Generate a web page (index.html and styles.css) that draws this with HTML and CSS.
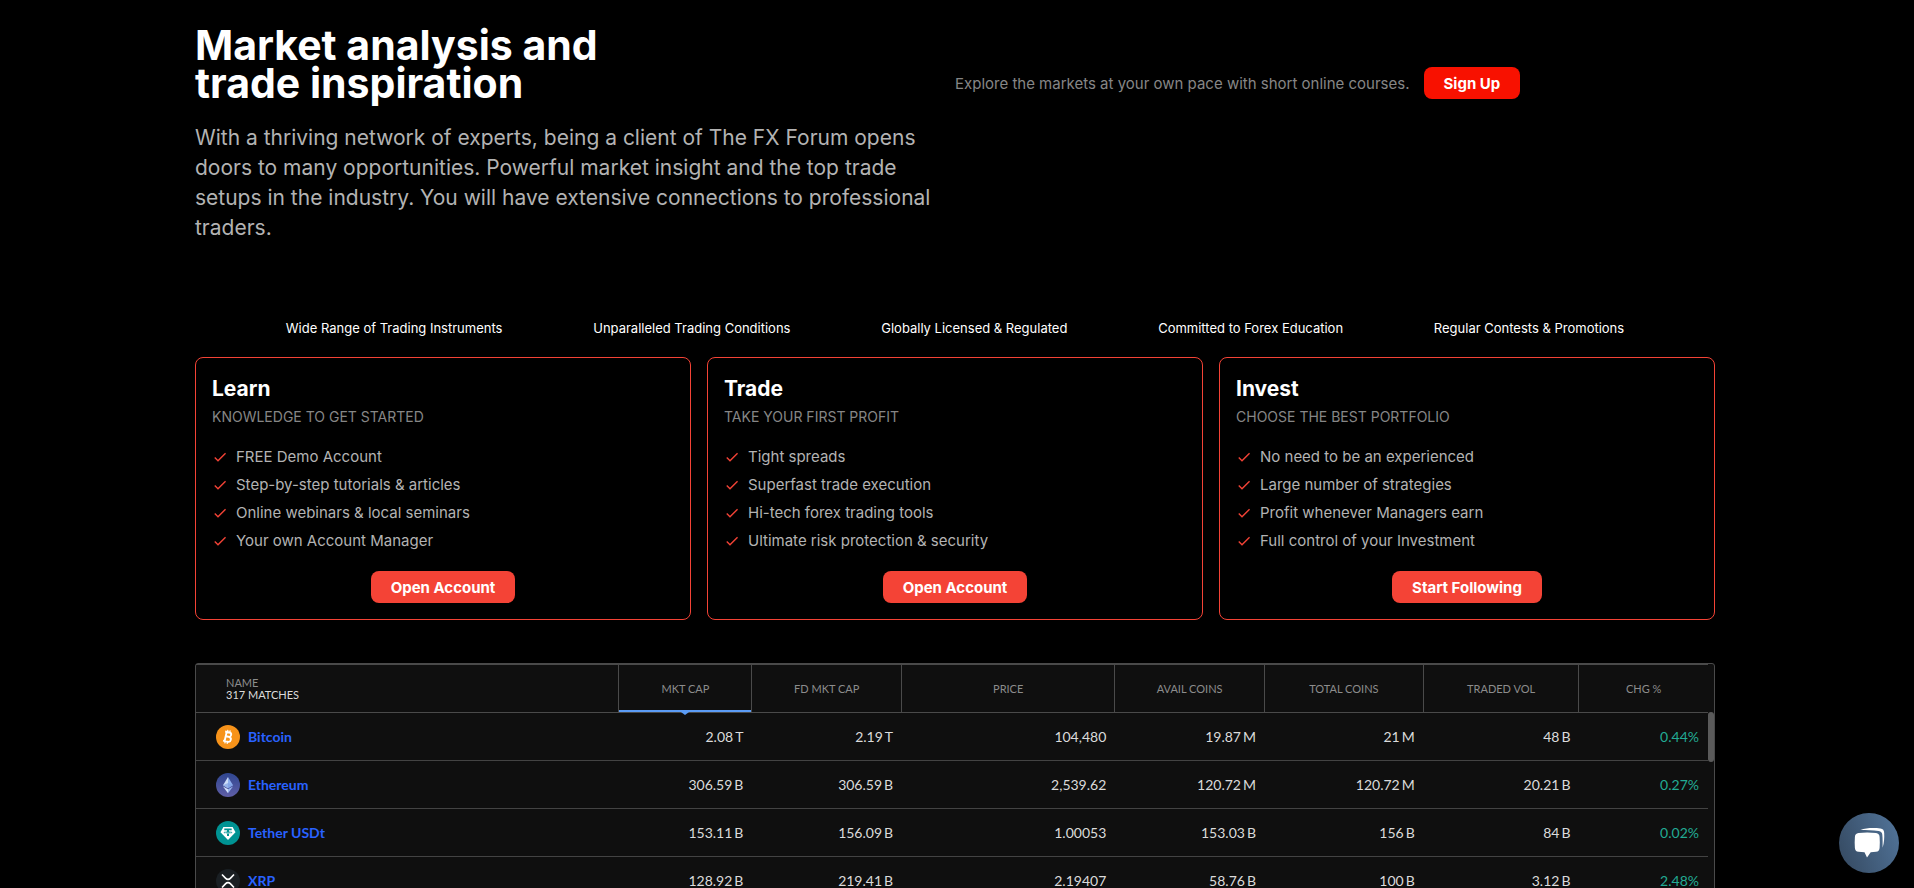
FILE: index.html
```html
<!DOCTYPE html>
<html lang="en">
<head>
<meta charset="utf-8">
<meta name="viewport" content="width=device-width, initial-scale=1">
<title>The FX Forum</title>
<link rel="stylesheet" href="styles.css">
</head>
<body>
<svg class="defs" aria-hidden="true">
  <symbol id="check" viewBox="0 0 24 24"><path d="M9 16.17 4.83 12l-1.42 1.41L9 19 21 7l-1.41-1.41z"/></symbol>
</svg>
<main class="page">
  <section class="hero">
    <div>
      <h1 class="hero-title">Market analysis and<br>trade inspiration</h1>
      <p class="hero-text">With a thriving network of experts, being a client of The FX Forum opens doors to many opportunities. Powerful market insight and the top trade setups in the industry. You will have extensive connections to professional traders.</p>
    </div>
    <div class="hero-cta">
      <span>Explore the markets at your own pace with short online courses.</span>
      <button class="btn btn-signup" type="button">Sign Up</button>
    </div>
  </section>

  <ul class="features">
    <li>Wide Range of Trading Instruments</li>
    <li>Unparalleled Trading Conditions</li>
    <li>Globally Licensed &amp; Regulated</li>
    <li>Committed to Forex Education</li>
    <li>Regular Contests &amp; Promotions</li>
  </ul>

  <section class="cards">
    <article class="card">
      <h2 class="card-title">Learn</h2>
      <p class="card-sub">KNOWLEDGE TO GET STARTED</p>
      <ul class="card-list">
        <li><svg class="check"><use href="#check"/></svg>FREE Demo Account</li>
        <li><svg class="check"><use href="#check"/></svg>Step-by-step tutorials &amp; articles</li>
        <li><svg class="check"><use href="#check"/></svg>Online webinars &amp; local seminars</li>
        <li><svg class="check"><use href="#check"/></svg>Your own Account Manager</li>
      </ul>
      <button class="btn" type="button">Open Account</button>
    </article>
    <article class="card">
      <h2 class="card-title">Trade</h2>
      <p class="card-sub">TAKE YOUR FIRST PROFIT</p>
      <ul class="card-list">
        <li><svg class="check"><use href="#check"/></svg>Tight spreads</li>
        <li><svg class="check"><use href="#check"/></svg>Superfast trade execution</li>
        <li><svg class="check"><use href="#check"/></svg>Hi-tech forex trading tools</li>
        <li><svg class="check"><use href="#check"/></svg>Ultimate risk protection &amp; security</li>
      </ul>
      <button class="btn" type="button">Open Account</button>
    </article>
    <article class="card">
      <h2 class="card-title">Invest</h2>
      <p class="card-sub">CHOOSE THE BEST PORTFOLIO</p>
      <ul class="card-list">
        <li><svg class="check"><use href="#check"/></svg>No need to be an experienced</li>
        <li><svg class="check"><use href="#check"/></svg>Large number of strategies</li>
        <li><svg class="check"><use href="#check"/></svg>Profit whenever Managers earn</li>
        <li><svg class="check"><use href="#check"/></svg>Full control of your Investment</li>
      </ul>
      <button class="btn" type="button">Start Following</button>
    </article>
  </section>

  <section class="screener">
    <table class="coins">
      <colgroup>
        <col class="c-name"><col class="c-cap"><col class="c-fd"><col class="c-price"><col class="c-avail"><col class="c-total"><col class="c-vol"><col class="c-chg">
      </colgroup>
      <thead>
        <tr>
          <th class="name-head" scope="col">NAME<span class="matches">317 MATCHES</span></th>
          <th class="sorted" scope="col">MKT CAP</th>
          <th scope="col">FD MKT CAP</th>
          <th scope="col">PRICE</th>
          <th scope="col">AVAIL COINS</th>
          <th scope="col">TOTAL COINS</th>
          <th scope="col">TRADED VOL</th>
          <th scope="col">CHG %</th>
        </tr>
      </thead>
      <tbody>
        <tr>
          <td><div class="coin">
            <svg class="coin-icon" viewBox="0 0 24 24"><circle cx="12" cy="12" r="12" fill="#f7931a"/><g transform="rotate(13 12 12)" fill="none" stroke="#fff"><path d="M9.600 7.300v9.400M8 7.300h4.400a2.100 2.100 0 0 1 0 4.400H9.800h3.100a2.400 2.400 0 0 1 0 5H8" stroke-width="1.900"/><path d="M10.300 5v2.200M12.700 5v2.200M10.300 16.800V19M12.700 16.800V19" stroke-width="1.200"/></g></svg>
            <a class="coin-link" href="#bitcoin">Bitcoin</a></div></td>
          <td>2.08<span class="unit">T</span></td><td>2.19<span class="unit">T</span></td><td>104,480</td><td>19.87<span class="unit">M</span></td><td>21<span class="unit">M</span></td><td>48<span class="unit">B</span></td><td class="up">0.44%</td>
        </tr>
        <tr>
          <td><div class="coin">
            <svg class="coin-icon" viewBox="0 0 24 24"><defs><linearGradient id="eth" x2="0" y2="1"><stop stop-color="#2f4690"/><stop offset="1" stop-color="#5f5ea6"/></linearGradient></defs><circle cx="12" cy="12" r="12" fill="url(#eth)"/><path d="M12 4 7 12.300 12 15.200z" fill="#cdddf8"/><path d="m12 4 5 8.300-5 2.900z" fill="#8fb0ee"/><path d="m12 10 5 2.300-5 2.900-5-2.900z" fill="#7fa1e4" opacity=".7"/><path d="m7 13.400 5 6.800v-3.900z" fill="#d4e2fa"/><path d="m17 13.400-5 6.800v-3.900z" fill="#9bb8ef"/></svg>
            <a class="coin-link" href="#ethereum">Ethereum</a></div></td>
          <td>306.59<span class="unit">B</span></td><td>306.59<span class="unit">B</span></td><td>2,539.62</td><td>120.72<span class="unit">M</span></td><td>120.72<span class="unit">M</span></td><td>20.21<span class="unit">B</span></td><td class="up">0.27%</td>
        </tr>
        <tr>
          <td><div class="coin">
            <svg class="coin-icon" viewBox="0 0 24 24"><circle cx="12" cy="12" r="12" fill="#009393"/><path d="M7.400 6h9.200l2.900 5.300L12 19l-7.500-7.700z" fill="#fff"/><path d="M8.300 7.500h7.400v1.800h-2.700v1.300c2 .1 3.400.5 3.400 1s-1.400.9-3.400 1V15h-2v-2.400c-2-.1-3.400-.5-3.400-1s1.400-.9 3.400-1V9.300H8.300z" fill="#009393"/><path d="M8.600 11.600c1.800.7 5 .7 6.800 0" fill="none" stroke="#fff" stroke-width=".7"/></svg>
            <a class="coin-link" href="#tether">Tether USDt</a></div></td>
          <td>153.11<span class="unit">B</span></td><td>156.09<span class="unit">B</span></td><td>1.00053</td><td>153.03<span class="unit">B</span></td><td>156<span class="unit">B</span></td><td>84<span class="unit">B</span></td><td class="up">0.02%</td>
        </tr>
        <tr>
          <td><div class="coin">
            <svg class="coin-icon" viewBox="0 0 24 24"><circle cx="12" cy="12" r="12" fill="#1a1f23"/><path d="m6 5.500 3.700 3.900a3.200 3.200 0 0 0 4.600 0L18 5.500M6 18.500l3.700-3.900a3.200 3.200 0 0 1 4.600 0l3.700 3.900" fill="none" stroke="#fff" stroke-width="1.600"/></svg>
            <a class="coin-link" href="#xrp">XRP</a></div></td>
          <td>128.92<span class="unit">B</span></td><td>219.41<span class="unit">B</span></td><td>2.19407</td><td>58.76<span class="unit">B</span></td><td>100<span class="unit">B</span></td><td>3.12<span class="unit">B</span></td><td class="up">2.48%</td>
        </tr>
      </tbody>
    </table>
    <div class="scroll-track"><div class="scroll-thumb"></div></div>
  </section>
</main>

<button class="chat" type="button" aria-label="Open chat">
  <svg class="chat-icon" viewBox="0 0 32 32"><path d="M7.500 2.900C13 .9 20.500.8 27.500 1.500c2.500.3 3.600 1.800 3.700 4.500.2 5 0 9.500-1.600 14.700.1-5 .1-8.700-.3-12.900-.2-2.400-1.300-3.600-3.500-3.900C19.500 3 13.500 3.300 7.500 2.900z"/><path d="M5.500 6.100c5.500-.7 12-.7 17.500 0 2.300.3 3.400 1.500 3.600 3.800.3 3.700.3 7.400 0 11-.2 2.300-1.300 3.500-3.600 3.800-1.800.3-3.500.4-5.300.5L14 30.500 11.500 25.200c-2-.1-4-.2-6-.5-2.300-.3-3.400-1.500-3.600-3.800-.3-3.600-.3-7.300 0-11 .2-2.300 1.300-3.500 3.600-3.800z"/></svg>
</button>
</body>
</html>
```

FILE: styles.css
```css
* {
  box-sizing: border-box;
}

body {
  margin: 0;
  padding-right: 4px;
  height: 100vh;
  overflow: hidden;
  background: #000;
  color: #fff;
  font-family: Inter, "Open Sans", sans-serif;
}

h1, h2, p, ul {
  margin: 0;
  padding: 0;
}

ul {
  list-style: none;
}

.defs {
  display: none;
}

.page {
  max-width: 1552px;
  margin: 0 auto;
  padding: 26px 16px 0;
}

/* Hero */
.hero {
  display: grid;
  grid-template-columns: 1fr 1fr;
  align-items: start;
}

.hero-title {
  font-size: 41px;
  line-height: 38px;
  font-weight: 700;
}

.hero-text {
  margin-top: 21px;
  color: #b3b3b3;
  font-size: 21px;
  line-height: 30px;
}

.hero-cta {
  display: flex;
  align-items: center;
  gap: 14px;
  padding-top: 41px;
  color: #868686;
  font-size: 15px;
}

.btn {
  height: 32px;
  padding: 0 20px;
  border: 0;
  border-radius: 8px;
  background: #f44336;
  color: #fff;
  font-family: inherit;
  font-size: 15px;
  font-weight: 700;
  cursor: pointer;
}

.btn-signup {
  background: #f81100;
}

/* Feature strip */
.features {
  display: flex;
  justify-content: space-evenly;
  margin-top: 73px;
  font-size: 13px;
  line-height: 24px;
}

/* Cards */
.cards {
  display: grid;
  grid-template-columns: repeat(3, 1fr);
  gap: 16px;
  margin-top: 17px;
}

.card {
  display: flex;
  flex-direction: column;
  padding: 16px;
  border: 1px solid #f44336;
  border-radius: 8px;
}

.card-title {
  font-size: 21px;
  line-height: 29px;
}

.card-sub {
  margin-top: 4px;
  color: #868686;
  font-size: 14px;
  line-height: 20px;
}

.card-list {
  margin: 16px 0;
  color: #b3b3b3;
  font-size: 15px;
  line-height: 28px;
}

.card-list li {
  display: flex;
  align-items: center;
  gap: 8px;
}

.check {
  width: 16px;
  height: 16px;
  fill: #f44336;
}

.card .btn {
  align-self: center;
}

/* Coin table */
.screener {
  display: flex;
  margin-top: 43px;
  border: 1px solid #4a4a4a;
  border-radius: 3px;
  background: #0f0f0f;
  font-family: Lato, "Open Sans", sans-serif;
}

.coins {
  flex: 1;
  table-layout: fixed;
  border-spacing: 0;
  font-size: 14px;
  color: #dbdbdb;
}

.c-name { width: 28%; }
.c-cap { width: 8.8%; }
.c-fd { width: 9.9%; }
.c-price { width: 14.1%; }
.c-avail { width: 9.9%; }
.c-total { width: 10.5%; }
.c-vol { width: 10.3%; }
.c-chg { width: 8.5%; }

.coins th {
  position: relative;
  height: 49px;
  padding: 0;
  border: solid #4a4a4a;
  border-width: 1px 1px 1px 0;
  color: #8c8c8c;
  font-size: 11px;
  line-height: 12px;
  font-weight: 400;
}

.coins th:last-child {
  border-right: 0;
}

.coins .name-head {
  padding-left: 30px;
  text-align: left;
}

.matches {
  display: block;
  color: #dbdbdb;
}

.sorted::before {
  content: "";
  position: absolute;
  left: 0;
  right: 0;
  bottom: 0;
  height: 2px;
  background: #5b9cf6;
}

.sorted::after {
  content: "";
  position: absolute;
  left: 50%;
  top: 100%;
  margin-left: -4px;
  border: 4px solid transparent;
  border-top: 3px solid #5b9cf6;
  border-bottom: 0;
}

.coins td {
  height: 48px;
  padding: 0 9px 0 0;
  border-bottom: 1px solid #434343;
  text-align: right;
}

.coin {
  display: flex;
  align-items: center;
  gap: 8px;
  padding-left: 20px;
}

.coin-icon {
  width: 24px;
  height: 24px;
}

.coin-link {
  color: #2962ff;
  font-weight: 700;
  text-decoration: none;
}

.unit {
  margin-left: 2px;
}

.coins .up {
  color: #22ab94;
}

.scroll-track {
  width: 6px;
  padding-top: 48px;
}

.scroll-thumb {
  height: 50px;
  border-radius: 3px;
  background: #5a5a5a;
}

/* Chat launcher */
.chat {
  position: fixed;
  right: 15px;
  bottom: 15px;
  display: grid;
  place-items: center;
  width: 60px;
  height: 60px;
  padding: 0;
  border: 0;
  border-radius: 50%;
  background: linear-gradient(70deg, #34485f, #52759b);
  cursor: pointer;
}

.chat-icon {
  width: 32px;
  height: 32px;
  fill: #fff;
}
```
